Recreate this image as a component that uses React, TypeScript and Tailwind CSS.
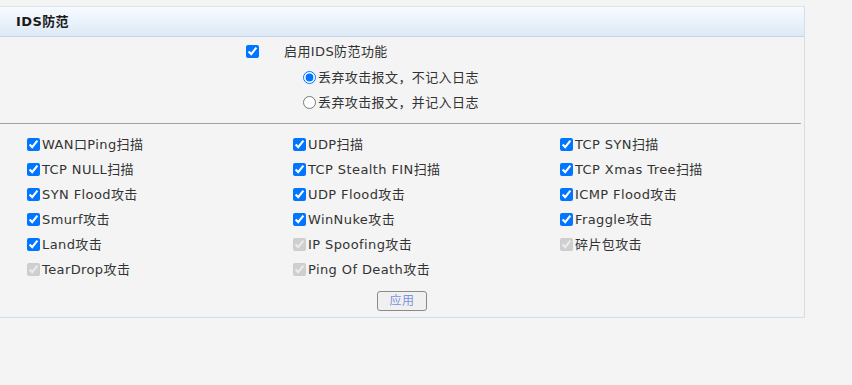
import React from 'react';

const font = { fontFamily: '"DejaVu Sans", "Noto Sans CJK SC", sans-serif' };

type Item = { label: string; checked: boolean; disabled?: boolean };

const items: Item[] = [
  { label: 'WAN口Ping扫描', checked: true },
  { label: 'UDP扫描', checked: true },
  { label: 'TCP SYN扫描', checked: true },
  { label: 'TCP NULL扫描', checked: true },
  { label: 'TCP Stealth FIN扫描', checked: true },
  { label: 'TCP Xmas Tree扫描', checked: true },
  { label: 'SYN Flood攻击', checked: true },
  { label: 'UDP Flood攻击', checked: true },
  { label: 'ICMP Flood攻击', checked: true },
  { label: 'Smurf攻击', checked: true },
  { label: 'WinNuke攻击', checked: true },
  { label: 'Fraggle攻击', checked: true },
  { label: 'Land攻击', checked: true },
  { label: 'IP Spoofing攻击', checked: true, disabled: true },
  { label: '碎片包攻击', checked: true, disabled: true },
  { label: 'TearDrop攻击', checked: true, disabled: true },
  { label: 'Ping Of Death攻击', checked: true, disabled: true },
];

export default function App() {
  return (
    <div className="min-h-screen bg-[#f4f4f4] pt-[6px] text-[13px] text-[#333] tracking-[0.4px]" style={font}>
      <div className="w-[805px] border-r border-b border-[#d3dee9]">
        {/* header */}
        <div className="h-[31px] flex items-center pl-4 border-t border-b border-t-[#dbe5ef] border-b-[#c5d6e7] bg-gradient-to-b from-[#f7fbff] to-[#dde9f6]">
          <span className="font-bold text-[13px] text-[#1a1a1a]">IDS防范</span>
        </div>

        {/* enable switch */}
        <div className="pt-[2px]">
          <div className="h-[25px] flex items-center pl-[246px]">
            <input type="checkbox" defaultChecked className="w-[13px] h-[13px]" />
            <span className="ml-[25px]">启用IDS防范功能</span>
          </div>
          <div className="mt-[1px]">
            <label className="h-[25px] flex items-center pl-[303px]">
              <input type="radio" name="mode" defaultChecked className="w-[13px] h-[13px]" />
              <span className="ml-[2px]">丢弃攻击报文，不记入日志</span>
            </label>
            <label className="h-[25px] flex items-center pl-[303px]">
              <input type="radio" name="mode" className="w-[13px] h-[13px]" />
              <span className="ml-[2px]">丢弃攻击报文，并记入日志</span>
            </label>
          </div>
        </div>

        <div className="mt-[8px] mr-[3px] h-px bg-[#a3a3a3]" />

        {/* attack options */}
        <div className="pt-[8px] pl-[27px] grid grid-cols-[266px_267px_1fr]">
          {items.map((it) => (
            <label key={it.label} className="h-[25px] flex items-center">
              <input
                type="checkbox"
                defaultChecked={it.checked}
                disabled={it.disabled}
                className="w-[13px] h-[13px]"
              />
              <span className="ml-[2px]">{it.label}</span>
            </label>
          ))}
        </div>

        <div className="flex justify-center pt-[9px] pb-[5px]">
          <button className="w-[50px] h-[20px] rounded-[3px] border border-[#8a8a8a] bg-[#f0f0f0] text-[12px] text-[#7d93dc] leading-none">
            应用
          </button>
        </div>
        <div className="h-[1px] bg-[#eef2f6]" />
      </div>
    </div>
  );
}
